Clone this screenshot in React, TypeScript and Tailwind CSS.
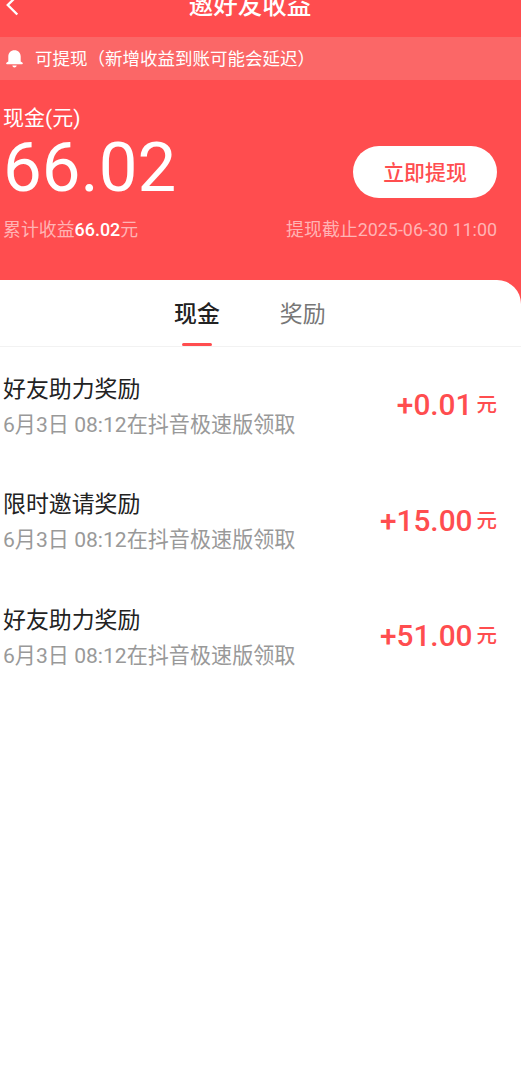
import React from 'react';

interface RewardRecord {
  title: string;
  detail: string;
  amount: string;
}

const records: RewardRecord[] = [
  { title: '好友助力奖励', detail: '6月3日 08:12在抖音极速版领取', amount: '+0.01' },
  { title: '限时邀请奖励', detail: '6月3日 08:12在抖音极速版领取', amount: '+15.00' },
  { title: '好友助力奖励', detail: '6月3日 08:12在抖音极速版领取', amount: '+51.00' },
];

const Header: React.FC = () => (
  <header className="relative h-[37px] shrink-0">
    <button className="absolute left-[5px] -top-[7px]" aria-label="返回">
      <svg width="16" height="24" viewBox="0 0 16 24" fill="none" stroke="white" strokeWidth="2.4">
        <path d="M12.3 2.5 2.8 12l9.5 9.5" />
      </svg>
    </button>
    <h1 className="-mt-[11px] pr-[21px] text-center text-[24.5px] leading-[34px] font-medium">邀好友收益</h1>
  </header>
);

const Notice: React.FC = () => (
  <div className="flex h-[43px] shrink-0 items-center bg-[#fb6767] pl-[6px] text-[17.5px]">
    <svg width="17" height="18" viewBox="0 0 17 18" fill="white" className="mr-[12px] shrink-0">
      <path d="M8.5.3C4.8.3 2.3 3 2.3 6.5v5l-1.6 1c-.9.7-.6 1.7.3 1.7h15c.9 0 1.2-1 .3-1.7l-1.6-1v-5C14.700 3 12.200.3 8.500.3Z" />
      <path d="M6.300 15.500h4.400c-.2 1.200-1.100 2-2.200 2s-2-.8-2.200-2Z" />
    </svg>
    <span className="pt-[1px]">可提现（新增收益到账可能会延迟）</span>
  </div>
);

const Balance: React.FC = () => (
  <section className="h-[200px] shrink-0 pr-[24px] pl-[3px]">
    <div className="pt-[22px] text-[21px] leading-[32px]">现金(元)</div>
    <div className="flex h-[72px] items-start justify-between">
      <div className="pt-[2px] text-[69px] leading-[64px]">66.02</div>
      <button className="mt-[12px] h-[52px] w-[144px] rounded-full bg-white pt-[3px] text-[20.900px] font-medium text-[#ff4d4f]">
        立即提现
      </button>
    </div>
    <div className="mt-[11px] flex justify-between text-[17.900px] leading-[26px] text-[#ffb3b4]">
      <span>
        累计收益<span className="font-medium text-white">66.02</span>元
      </span>
      <span>提现截止2025-06-30 11:00</span>
    </div>
  </section>
);

const RecordRow: React.FC<{ record: RewardRecord }> = ({ record }) => (
  <li className="flex h-[115.500px] items-center justify-between pr-[24px] pl-[3px]">
    <div className="pt-[4px]">
      <div className="text-[22.900px] leading-[34px] text-[#222]">{record.title}</div>
      <div className="mt-[2px] text-[21.100px] leading-[32px] text-[#999]">{record.detail}</div>
    </div>
    <div className="flex items-center pt-[2px] font-medium text-[#ff4d4f]">
      <span className="text-[29.800px]">{record.amount}</span>
      <span className="ml-[4px] text-[20.500px]">元</span>
    </div>
  </li>
);

export default function App() {
  return (
    <div className="flex h-[1076px] w-[521px] flex-col overflow-hidden bg-[#ff4d4f] font-['Roboto','Noto_Sans_CJK_SC',sans-serif] text-white">
      <Header />
      <Notice />
      <Balance />
      <main className="flex-1 rounded-tr-[24px] bg-white">
        <nav className="flex h-[67px] border-b border-[#f2f2f2] pl-[174px] text-[22.900px]">
          <button className="relative mr-[60px] pt-[5px] font-medium text-[#222]">
            现金
            <span className="absolute bottom-0 left-[8px] h-[3px] w-[30px] rounded-full bg-[#ff4d4f]" />
          </button>
          <button className="pt-[5px] text-[#777]">奖励</button>
        </nav>
        <ul>
          {records.map((record, i) => (
            <RecordRow key={i} record={record} />
          ))}
        </ul>
      </main>
    </div>
  );
}
